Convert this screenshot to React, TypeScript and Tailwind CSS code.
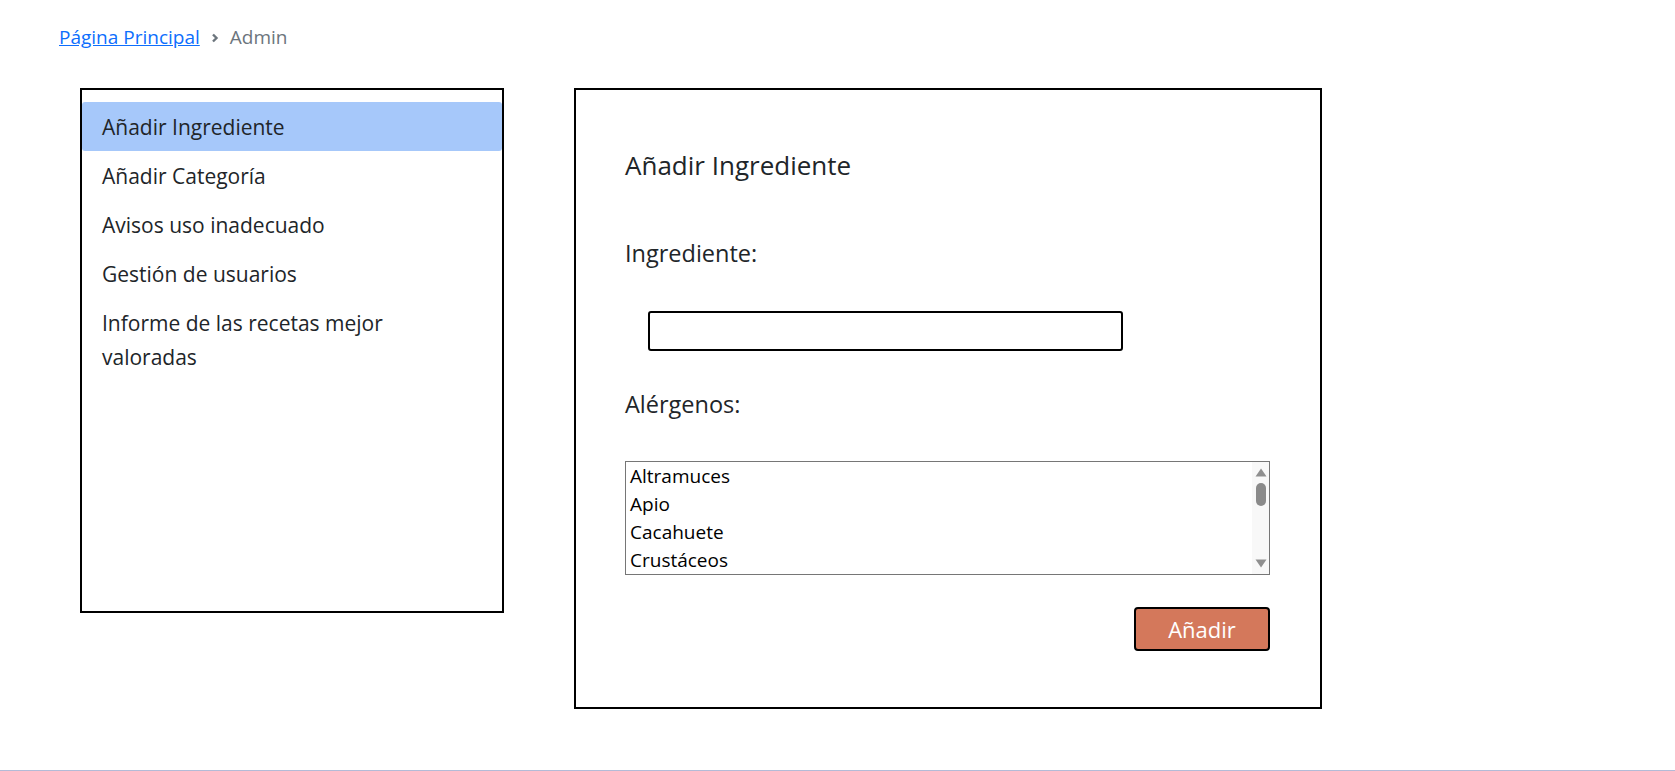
const MENU = [
  'Añadir Ingrediente',
  'Añadir Categoría',
  'Avisos uso inadecuado',
  'Gestión de usuarios',
  'Informe de las recetas mejor valoradas',
]

const ALERGENOS = ['Altramuces', 'Apio', 'Cacahuete', 'Crustáceos']

function Scrollbar() {
  return (
    <div className="flex w-[17px] flex-col items-center bg-[#f8f8f8] py-[6px]">
      <svg width="12" height="9" viewBox="0 0 12 9" className="shrink-0">
        <path d="M6 0.5 L11.5 8.5 L0.5 8.5 Z" fill="#8f8f8f" />
      </svg>
      <div className="mt-[6px] h-[23px] w-[10px] rounded-full bg-[#8a8a8a]" />
      <div className="flex-1" />
      <svg width="12" height="9" viewBox="0 0 12 9" className="shrink-0">
        <path d="M0.5 0.5 L11.5 0.5 L6 8.5 Z" fill="#8f8f8f" />
      </svg>
    </div>
  )
}

export default function App() {
  return (
    <div className="flex h-[771px] flex-col bg-white font-['Open_Sans',sans-serif] text-[#212529]">
      <div className="flex-1">
        <nav className="flex items-center pl-[59px] pt-[24px] text-[19px] leading-[27px]">
          <a href="#" className="text-[#0d6efd] underline">
            Página Principal
          </a>
          <svg width="8" height="10" viewBox="0 0 8 10" className="mx-[11px] shrink-0">
            <path d="M2 1.5 L5.5 5 L2 8.5" fill="none" stroke="#6c757d" strokeWidth="2.4" />
          </svg>
          <span className="text-[#6c757d]">Admin</span>
        </nav>

        <div className="mt-[37px] flex items-start gap-[70px] pl-[80px]">
          <aside className="h-[525px] w-[424px] border-2 border-black pt-[12px]">
            <ul>
              {MENU.map((m, i) => (
                <li
                  key={m}
                  className={
                    'rounded-[3px] py-[7.5px] pl-[20px] text-[21px] leading-[34px] ' +
                    (i === 0 ? 'bg-[#a6c8fa]' : '')
                  }
                >
                  <span className="block max-w-[320px]">{m}</span>
                </li>
              ))}
            </ul>
          </aside>

          <main className="flex h-[621px] w-[748px] flex-col border-2 border-black pl-[49px] pr-[50px] pt-[59px]">
            <h4 className="text-[26px] leading-[32px]">Añadir Ingrediente</h4>
            <label className="mt-[57px] text-[23.5px] leading-[30px]">Ingrediente:</label>
            <input
              type="text"
              className="ml-[23px] mt-[43px] h-[40px] w-[475px] rounded-[3px] border-2 border-black outline-none"
            />
            <label className="mt-[38px] text-[23.5px] leading-[30px]">Alérgenos:</label>
            <div className="mt-[42px] flex h-[114px] border border-[#767676] bg-white">
              <div className="flex-1 pl-[4px] text-[19px] text-black">
                {ALERGENOS.map((a) => (
                  <div key={a} className="flex h-[28px] items-center">
                    {a}
                  </div>
                ))}
              </div>
              <Scrollbar />
            </div>
            <div className="mt-[32px] flex justify-end">
              <button className="h-[44px] w-[136px] rounded-[4px] border-2 border-black bg-[#d4785b] text-[22px] text-white">
                Añadir
              </button>
            </div>
          </main>
        </div>
      </div>
      <div className="h-px bg-[#b3bbd7]" />
    </div>
  )
}
